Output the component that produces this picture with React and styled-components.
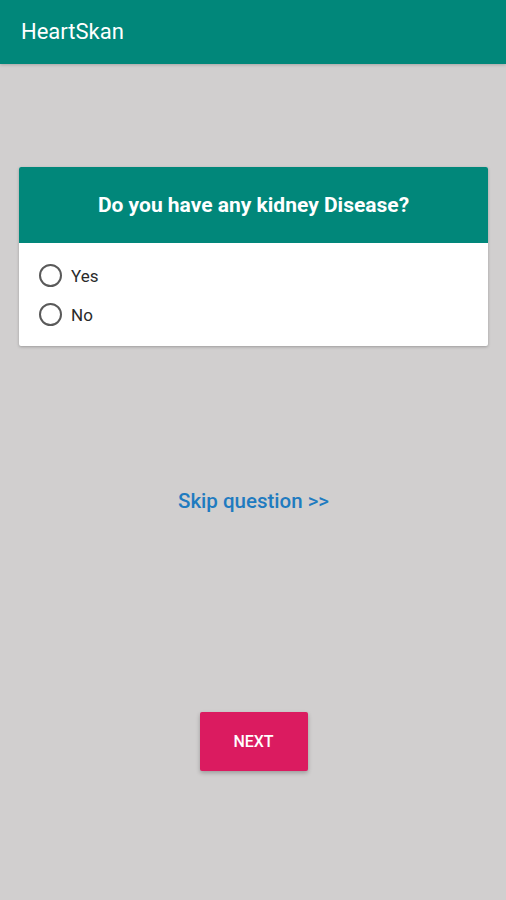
import { useState } from "react"
import styled, { createGlobalStyle } from "styled-components"

const GlobalStyle = createGlobalStyle`
  html, body {
    margin: 0;
    padding: 0;
    background: #d1cfcf;
    font-family: Roboto, "Liberation Sans", sans-serif;
  }
`

const Screen = styled.div`
  width: 506px;
  height: 900px;
  background: #d1cfcf;
  display: flex;
  flex-direction: column;
`
const AppBar = styled.header`
  height: 64px;
  background: #01877a;
  display: flex;
  align-items: center;
  padding: 0 21px;
  box-sizing: border-box;
  box-shadow: 0 1px 3px rgba(0, 0, 0, 0.2);
`
const AppTitle = styled.h1`
  margin: 0 0 2px;
  color: #ffffff;
  font-size: 22px;
  font-weight: 400;
`
const Body = styled.main`
  display: flex;
  flex-direction: column;
  align-items: center;
  padding: 103px 18px 0 19px;
`
const Card = styled.section`
  width: 100%;
  background: #ffffff;
  border-radius: 2px;
  box-shadow: 0 1px 3px rgba(0, 0, 0, 0.25);
  overflow: hidden;
`
const CardHeader = styled.div`
  height: 76px;
  background: #01877a;
  display: flex;
  align-items: center;
  justify-content: center;
`
const Question = styled.h2`
  margin: 0 0 1px;
  color: #ffffff;
  font-size: 21px;
  font-weight: 700;
`
const Options = styled.div`
  display: flex;
  flex-direction: column;
  gap: 16px;
  padding: 21px 0 20px 20px;
`
const Option = styled.label`
  display: flex;
  align-items: center;
  gap: 9px;
  font-size: 17px;
  color: #2a2a2a;
  cursor: pointer;
`
const Radio = styled.span`
  width: 23px;
  height: 23px;
  border-radius: 50%;
  border: 2px solid ${(p) => (p.checked ? "#01877a" : "#5a5a5a")};
  box-sizing: border-box;
  display: flex;
  align-items: center;
  justify-content: center;
  &::after {
    content: "";
    width: 11px;
    height: 11px;
    border-radius: 50%;
    background: ${(p) => (p.checked ? "#01877a" : "transparent")};
  }
`
const Skip = styled.a`
  margin-top: 143px;
  color: #1f7bc0;
  font-size: 20.5px;
  font-weight: 500;
  cursor: pointer;
`
const NextButton = styled.button`
  margin-top: 199px;
  width: 108px;
  height: 59px;
  border: none;
  border-radius: 2px;
  background: #db1b60;
  color: #ffffff;
  font-family: inherit;
  font-size: 16px;
  font-weight: 500;
  box-shadow: 0 2px 4px rgba(0, 0, 0, 0.25);
  cursor: pointer;
`

const App = () => {
  const [answer, setAnswer] = useState(null)

  return (
    <Screen>
      <GlobalStyle />
      <AppBar>
        <AppTitle>HeartSkan</AppTitle>
      </AppBar>
      <Body>
        <Card>
          <CardHeader>
            <Question>Do you have any kidney Disease?</Question>
          </CardHeader>
          <Options>
            {["Yes", "No"].map((o) => (
              <Option key={o} onClick={() => setAnswer(o)}>
                <Radio checked={answer === o} />
                {o}
              </Option>
            ))}
          </Options>
        </Card>
        <Skip>Skip question &gt;&gt;</Skip>
        <NextButton>NEXT</NextButton>
      </Body>
    </Screen>
  )
}

export default App
